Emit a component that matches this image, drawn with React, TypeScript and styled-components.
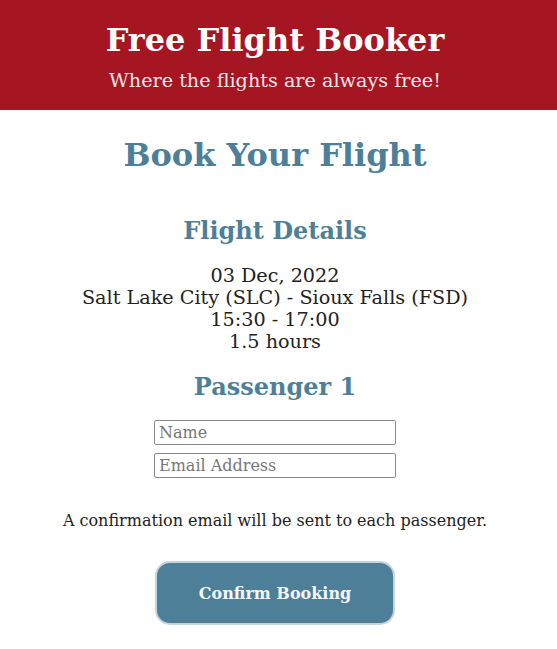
import React from "react";
import styled, { createGlobalStyle } from "styled-components";

const Global = createGlobalStyle`
  body { margin: 0; font-family: "DejaVu Serif", serif; background: #fff; color: #222; }
`;

const Header = styled.header`
  background: #a51522;
  color: #fff;
  text-align: center;
  height: 110px;
  box-sizing: border-box;
  padding: 21px 7px 0 0;
`;

const Title = styled.h1`
  margin: 0;
  font-size: 32px;
  line-height: 38px;
  font-weight: bold;
`;

const Subtitle = styled.p`
  margin: 11px 0 0;
  font-size: 19.2px;
  line-height: 22px;
  color: #f6e6e8;
`;

const Main = styled.main`
  display: flex;
  flex-direction: column;
  align-items: center;
  text-align: center;
  padding-right: 7px;
`;

const Heading = styled.h2<{ $size: number; $top: number }>`
  margin: ${(p) => p.$top}px 0 0;
  font-size: ${(p) => p.$size}px;
  line-height: ${(p) => Math.round(p.$size * 1.2)}px;
  color: #4e7f99;
  font-weight: bold;
`;

const Details = styled.div`
  margin-top: 20px;
  font-size: 19.2px;
  line-height: 22px;
  color: #222;
`;

const Form = styled.form`
  display: flex;
  flex-direction: column;
  align-items: center;
  gap: 8px;
  margin-top: 19px;
`;

const Input = styled.input`
  width: 242px;
  height: 25px;
  box-sizing: border-box;
  border: 1px solid #8a8a90;
  border-radius: 2px;
  font-family: "DejaVu Serif", serif;
  font-size: 16px;
  padding: 0 4px;
  color: #222;
  &::placeholder { color: #777; }
`;

const Note = styled.p`
  margin: 33px 0 0;
  font-size: 16px;
  line-height: 20px;
`;

const Button = styled.button`
  margin-top: 30px;
  width: 240px;
  height: 64px;
  border-radius: 15px;
  border: 2px solid #c5d3de;
  background: #4e7f99;
  color: #f4f7fa;
  font-family: "DejaVu Serif", serif;
  font-size: 16px;
  font-weight: bold;
  cursor: pointer;
`;

export default function App() {
  return (
    <>
      <Global />
      <Header>
        <Title>Free Flight Booker</Title>
        <Subtitle>Where the flights are always free!</Subtitle>
      </Header>
      <Main>
        <Heading $size={32} $top={26}>Book Your Flight</Heading>
        <Heading $size={24} $top={42}>Flight Details</Heading>
        <Details>
          <div>03 Dec, 2022</div>
          <div>Salt Lake City (SLC) - Sioux Falls (FSD)</div>
          <div>15:30 - 17:00</div>
          <div>1.5 hours</div>
        </Details>
        <Heading $size={24} $top={19}>Passenger 1</Heading>
        <Form onSubmit={(e) => e.preventDefault()}>
          <Input placeholder="Name" />
          <Input placeholder="Email Address" />
        </Form>
        <Note>A confirmation email will be sent to each passenger.</Note>
        <Button>Confirm Booking</Button>
      </Main>
    </>
  );
}
